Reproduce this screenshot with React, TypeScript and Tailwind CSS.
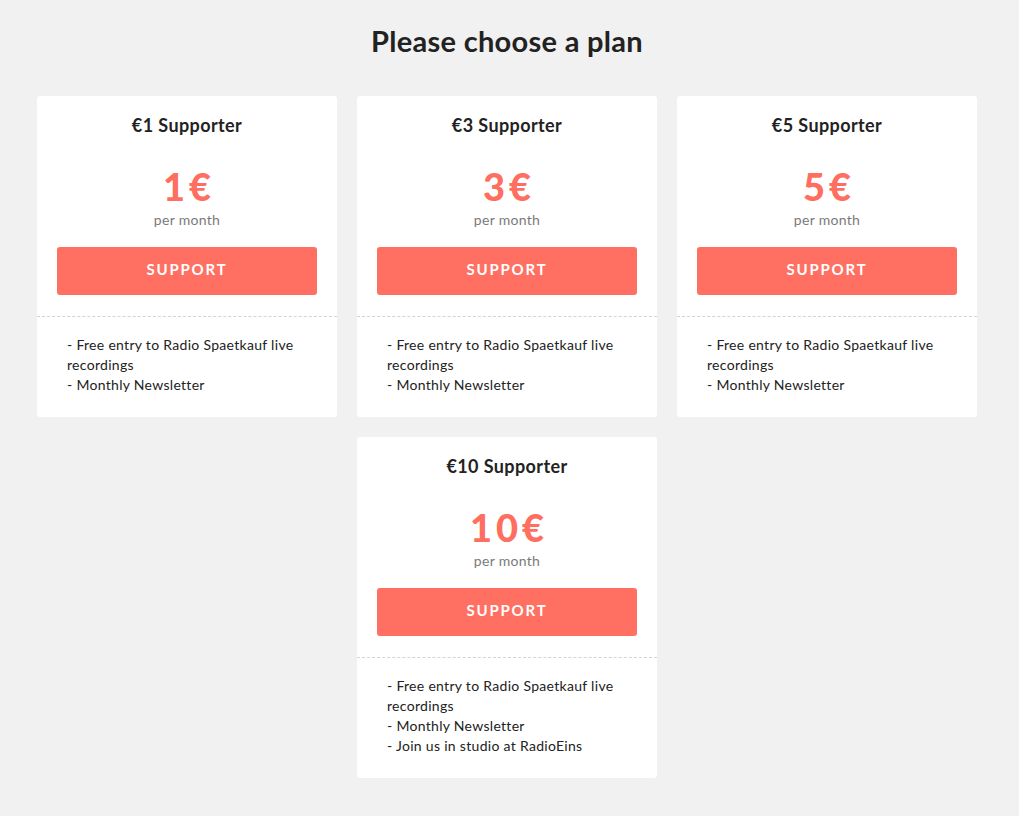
import React from 'react';

interface Plan {
  name: string;
  amount: string;
  perks: string[];
}

const basePerks = ['- Free entry to Radio Spaetkauf live recordings', '- Monthly Newsletter'];

const plans: Plan[] = [
  { name: '€1 Supporter', amount: '1', perks: basePerks },
  { name: '€3 Supporter', amount: '3', perks: basePerks },
  { name: '€5 Supporter', amount: '5', perks: basePerks },
  { name: '€10 Supporter', amount: '10', perks: [...basePerks, '- Join us in studio at RadioEins'] },
];

const PlanCard = ({ plan }: { plan: Plan }) => (
  <div className="w-[300px] bg-white rounded-[3px] flex flex-col">
    {/* header */}
    <div className="px-5 pt-[17px] pb-[21px] flex flex-col items-center">
      <h2 className="text-[18px] leading-6 font-bold text-[#222] tracking-[0.4px]">{plan.name}</h2>
      <div className="mt-[28px] text-[38px] leading-[42px] font-black text-[#ff6f61] tracking-[4px] pl-[4px]">
        {plan.amount}€
      </div>
      <div className="text-[14px] leading-5 text-[#7a7a7a] mt-[3px] tracking-[0.3px]">per month</div>
      <button className="mt-[17px] w-full h-12 pb-[3px] rounded-[3px] bg-[#ff7063] text-white font-bold text-[15px] tracking-[1.8px]">
        SUPPORT
      </button>
    </div>

    {/* perks */}
    <div className="border-t border-dashed border-[#d4d4d4] pl-[30px] pr-5 pt-[18px] pb-[22px]">
      {plan.perks.map((p) => (
        <p key={p} className="text-[14px] leading-5 text-[#222] tracking-[0.3px]">
          {p}
        </p>
      ))}
    </div>
  </div>
);

const App = () => {
  return (
    <div
      className="min-h-screen bg-[#f1f1f1] pb-10"
      style={{ fontFamily: 'Lato, "Open Sans", sans-serif' }}
    >
      <div className="w-[1014px] flex flex-col items-center">
        <h1 className="pt-[23px] text-[29px] leading-[36px] font-bold text-[#222] tracking-[0.3px]">
          Please choose a plan
        </h1>
        <div className="mt-[37px] w-[940px] flex flex-wrap justify-center items-start gap-5">
          {plans.map((p) => (
            <PlanCard key={p.name} plan={p} />
          ))}
        </div>
      </div>
    </div>
  );
};

export default App;
